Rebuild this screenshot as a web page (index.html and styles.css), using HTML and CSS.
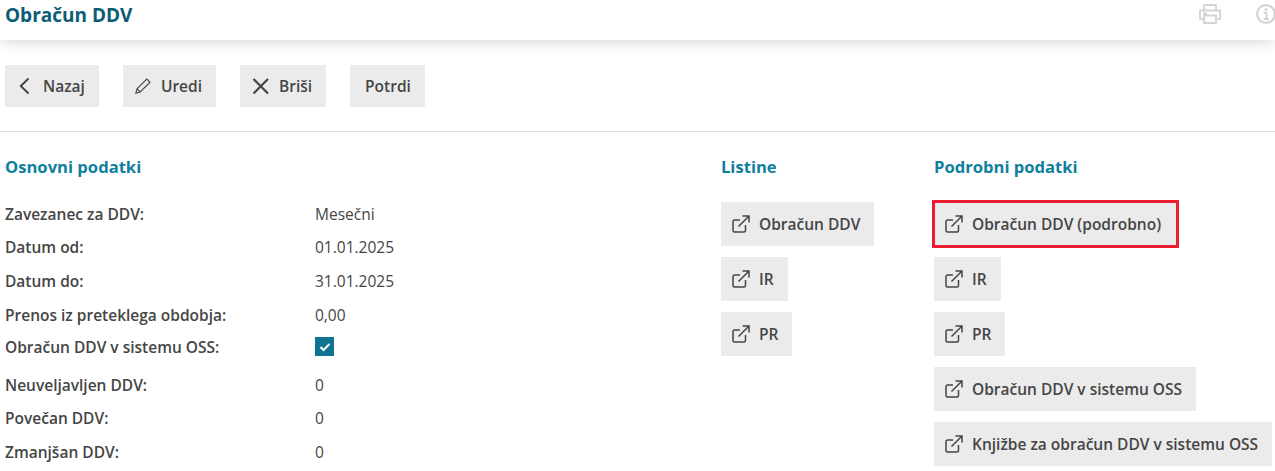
FILE: index.html
```html
<!DOCTYPE html>
<html lang="sl">
<head>
    <meta charset="UTF-8">
    <meta name="viewport" content="width=device-width, initial-scale=1.0">
    <title>Obračun DDV</title>
    <link rel="stylesheet" href="styles.css">
</head>
<body>
    <svg class="icon-defs" width="0" height="0">
        <symbol id="ext" viewBox="0 0 18 18">
            <path d="M13.5 10v5.500a1.500 1.500 0 0 1-1.500 1.500H2.500A1.500 1.500 0 0 1 1 15.500V6.500A1.500 1.500 0 0 1 2.500 5H8" fill="none" stroke="currentColor" stroke-width="1.500"/>
            <path d="M6.500 11.500 16.500 1.500M10.500 1h6.500v6.500" fill="none" stroke="currentColor" stroke-width="1.500"/>
        </symbol>
    </svg>

    <header class="topbar">
        <h1>Obračun DDV</h1>
        <div class="topbar-icons">
            <svg class="top-icon" width="22" height="20" viewBox="0 0 22 20">
                <path d="M5 6V1h12v5M5 15H1V6.500h20V15H17M5 11.500h12V19H5zM4 9.500h4" fill="none" stroke="currentColor" stroke-width="1.800"/>
            </svg>
            <svg class="top-icon" width="20" height="20" viewBox="0 0 20 20">
                <circle cx="10" cy="10" r="8.900" fill="none" stroke="currentColor" stroke-width="2.200"/>
                <path d="M7.800 8.700h2.700V14.500M7.600 15h5.400" fill="none" stroke="currentColor" stroke-width="1.900"/>
                <circle cx="10" cy="5.400" r="1.500" fill="currentColor"/>
            </svg>
        </div>
    </header>

    <div class="toolbar">
        <button class="btn">
            <svg width="18" height="18" viewBox="0 0 18 18"><path d="M11.500 1.500 3.800 9l7.700 7.500" fill="none" stroke="currentColor" stroke-width="1.900"/></svg>
            Nazaj
        </button>
        <button class="btn">
            <svg width="18" height="18" viewBox="0 0 18 18"><path d="M.8 16.300 2 11.800 11.800 2 15 5.200 5.200 15ZM2 11.800l3.200 3.200" fill="none" stroke="currentColor" stroke-width="1.100"/></svg>
            Uredi
        </button>
        <button class="btn">
            <svg width="19" height="18" viewBox="0 0 19 18"><path d="M1.500 2 16 16.500M16 2 1.500 16.500" fill="none" stroke="currentColor" stroke-width="2.200"/></svg>
            Briši
        </button>
        <button class="btn btn-plain">Potrdi</button>
    </div>

    <main class="content">
        <section class="col-basic">
            <h3>Osnovni podatki</h3>
            <dl class="fields">
                <div class="field"><dt>Zavezanec za DDV:</dt><dd>Mesečni</dd></div>
                <div class="field"><dt>Datum od:</dt><dd>01.01.2025</dd></div>
                <div class="field"><dt>Datum do:</dt><dd>31.01.2025</dd></div>
                <div class="field"><dt>Prenos iz preteklega obdobja:</dt><dd>0,00</dd></div>
                <div class="field field-check">
                    <dt>Obračun DDV v sistemu OSS:</dt>
                    <dd>
                        <span class="checkbox">
                            <svg width="12" height="10" viewBox="0 0 12 10"><path d="M1.500 5 4.500 8 10.500 2" fill="none" stroke="#fff" stroke-width="2"/></svg>
                        </span>
                    </dd>
                </div>
                <div class="field"><dt>Neuveljavljen DDV:</dt><dd>0</dd></div>
                <div class="field"><dt>Povečan DDV:</dt><dd>0</dd></div>
                <div class="field"><dt>Zmanjšan DDV:</dt><dd>0</dd></div>
            </dl>
        </section>

        <section class="col-docs">
            <h3>Listine</h3>
            <div class="links">
                <a class="btn"><svg width="18" height="18"><use href="#ext"/></svg>Obračun DDV</a>
                <a class="btn"><svg width="18" height="18"><use href="#ext"/></svg>IR</a>
                <a class="btn"><svg width="18" height="18"><use href="#ext"/></svg>PR</a>
            </div>
        </section>

        <section class="col-details">
            <h3>Podrobni podatki</h3>
            <div class="links">
                <a class="btn btn-marked"><svg width="18" height="18"><use href="#ext"/></svg>Obračun DDV (podrobno)</a>
                <a class="btn"><svg width="18" height="18"><use href="#ext"/></svg>IR</a>
                <a class="btn"><svg width="18" height="18"><use href="#ext"/></svg>PR</a>
                <a class="btn"><svg width="18" height="18"><use href="#ext"/></svg>Obračun DDV v sistemu OSS</a>
                <a class="btn"><svg width="18" height="18"><use href="#ext"/></svg>Knjižbe za obračun DDV v sistemu OSS</a>
            </div>
        </section>
    </main>
</body>
</html>
```

FILE: styles.css
```css
html, body {
    height: 100%;
    overflow: hidden;
}
body {
    margin: 0;
    font-family: "Open Sans", sans-serif;
    font-size: 15.5px;
    color: #454545;
    background-color: white;
}
.icon-defs {
    display: block;
    height: 0;
}
.topbar {
    height: 40px;
    padding: 0 0 0 5px;
    display: flex;
    justify-content: space-between;
    box-shadow: 0 1px 16px rgba(0, 0, 0, 0.18);
}
.topbar h1 {
    margin: 0;
    font-size: 19px;
    line-height: 30px;
    font-weight: 700;
    color: #0b5c75;
}
.topbar-icons {
    display: flex;
    gap: 35px;
    padding-top: 4px;
    margin-right: -1px;
    align-items: flex-start;
}
.top-icon {
    color: #d4d4d4;
}
.toolbar {
    display: flex;
    gap: 24px;
    padding: 25px 0 24px 5px;
    border-bottom: 1px solid #dedede;
}
.btn {
    display: inline-flex;
    align-items: center;
    gap: 8px;
    box-sizing: border-box;
    height: 42px;
    padding: 0 14px 0 12px;
    border: none;
    background-color: #ebebeb;
    color: #454545;
    font-family: inherit;
    font-size: 15.5px;
    font-weight: 600;
}
.btn-plain {
    padding: 0 14px 0 15px;
}
.content {
    display: flex;
    padding: 23px 0 0 5px;
}
.col-basic {
    width: 716px;
}
.col-docs {
    width: 213px;
}
h3 {
    margin: 0;
    font-size: 16.600px;
    line-height: 24px;
    font-weight: 700;
    color: #0f7f9e;
}
.fields {
    margin: 18px 0 0;
}
.field {
    display: flex;
    height: 33.600px;
    align-items: center;
}
.field-check {
    height: 31px;
    margin-bottom: 5.400px;
}
.field dt {
    width: 310px;
    font-weight: 600;
}
.field dd {
    margin: 0;
    display: flex;
}
.checkbox {
    display: flex;
    align-items: center;
    justify-content: center;
    width: 19px;
    height: 19px;
    background-color: #0f7391;
}
.links {
    display: flex;
    flex-direction: column;
    align-items: flex-start;
    gap: 11px;
    margin-top: 23px;
}
.links .btn {
    padding: 0 14px 0 11px;
    gap: 9px;
    height: 44px;
}
.links .btn-marked {
    padding-right: 16px;
    outline: 3px solid #ed1c2e;
    outline-offset: -1px;
}
```
